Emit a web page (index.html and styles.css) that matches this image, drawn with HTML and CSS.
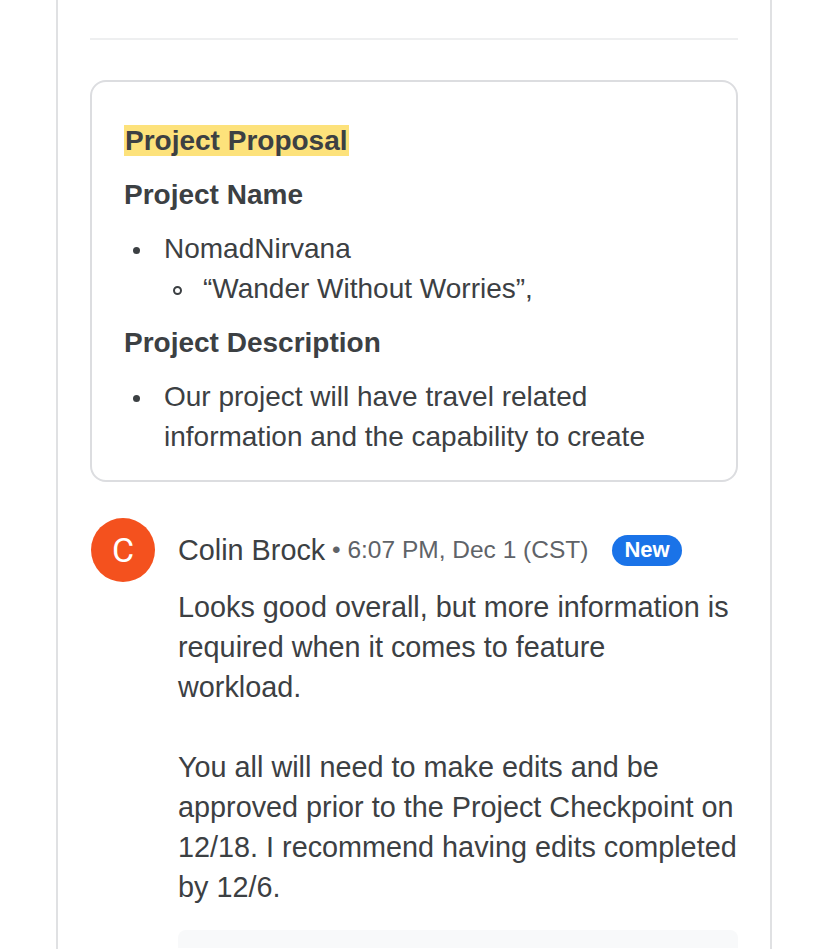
FILE: index.html
```html
<!DOCTYPE html>
<html lang="en">
<head>
<meta charset="utf-8">
<title>Project Proposal</title>
<link rel="stylesheet" href="styles.css">
</head>
<body>
<div class="thread">
  <hr class="rule">
  <div class="card">
    <p class="title"><span class="highlight">Project Proposal</span></p>
    <p class="heading">Project Name</p>
    <ul class="list">
      <li>NomadNirvana
        <ul class="sublist">
          <li>“Wander Without Worries”,</li>
        </ul>
      </li>
    </ul>
    <p class="heading">Project Description</p>
    <ul class="list">
      <li>Our project will have travel related information and the capability to create</li>
    </ul>
  </div>

  <div class="comment">
    <div class="avatar">C</div>
    <div class="comment-body">
      <div class="comment-header">
        <span class="author">Colin Brock</span>
        <span class="meta">&nbsp;• 6:07 PM, Dec 1 (CST)</span>
        <span class="badge">New</span>
      </div>
      <p class="text">Looks good overall, but more information is required when it comes to feature<br>workload.</p>
      <p class="text">You all will need to make edits and be approved prior to the Project Checkpoint on 12/18. I recommend having edits completed by 12/6.</p>
      <div class="reply-box"></div>
    </div>
  </div>
</div>
</body>
</html>
```

FILE: styles.css
```css
html, body {
  margin: 0;
  padding: 0;
  background: #ffffff;
}

body {
  font-family: "Liberation Sans", Arial, Helvetica, sans-serif;
  color: #3c4043;
  overflow: hidden;
  height: 949px;
}

.thread {
  box-sizing: border-box;
  margin-left: 56px;
  width: 716px;
  height: 949px;
  padding: 38px 32px 0;
  border-left: 2px solid #e0e1e3;
  border-right: 2px solid #e0e1e3;
  overflow: hidden;
}

.rule {
  margin: 0;
  border: 0;
  height: 2px;
  background: #eeeff0;
}

.card {
  margin-top: 40px;
  border: 2px solid #dcdde0;
  border-radius: 16px;
  padding: 39px 32px 23px;
  display: flex;
  flex-direction: column;
  gap: 14px;
  font-size: 28px;
  line-height: 40px;
}

.card p {
  margin: 0;
}

.title {
  font-weight: 700;
}

.highlight {
  background: #fde27b;
  padding: 0 1px;
}

.heading {
  font-weight: 700;
}

.list {
  margin: 0;
  padding-left: 40px;
  list-style: none;
}

.list > li::before {
  content: "";
  display: inline-block;
  width: 7px;
  height: 7px;
  margin-left: -31px;
  margin-right: 24px;
  border-radius: 50%;
  background: #3c4043;
  vertical-align: middle;
}

.sublist {
  margin: 0;
  padding-left: 39px;
  list-style: none;
}

.sublist > li::before {
  content: "";
  display: inline-block;
  box-sizing: border-box;
  width: 9px;
  height: 9px;
  margin-left: -30px;
  margin-right: 21px;
  border-radius: 50%;
  border: 2px solid #3c4043;
  vertical-align: middle;
}

.comment {
  margin-top: 36px;
  display: flex;
  align-items: flex-start;
  gap: 23px;
}

.avatar {
  flex: none;
  width: 64px;
  height: 64px;
  margin-left: 1px;
  border-radius: 50%;
  background: #f4511e;
  color: #ffffff;
  font-family: Roboto, "Liberation Sans", sans-serif;
  font-size: 34px;
  display: flex;
  align-items: center;
  justify-content: center;
}

.comment-body {
  flex: 1;
  min-width: 0;
}

.comment-header {
  height: 64px;
  display: flex;
  align-items: center;
  white-space: nowrap;
}

.author {
  font-size: 28.8px;
}

.meta {
  font-size: 24.5px;
  color: #5f6368;
}

.badge {
  margin-left: 24px;
  height: 31px;
  padding: 0 12px;
  border-radius: 16px;
  background: #1a73e8;
  color: #ffffff;
  font-weight: 700;
  font-size: 22px;
  display: flex;
  align-items: center;
}

.text {
  margin: 5px -6px 0 0;
  font-size: 28.8px;
  line-height: 40px;
}

.text + .text {
  margin-top: 40px;
}

.reply-box {
  margin-top: 23px;
  height: 18px;
  background: #f8f9fa;
  border-radius: 8px 8px 0 0;
}
```
